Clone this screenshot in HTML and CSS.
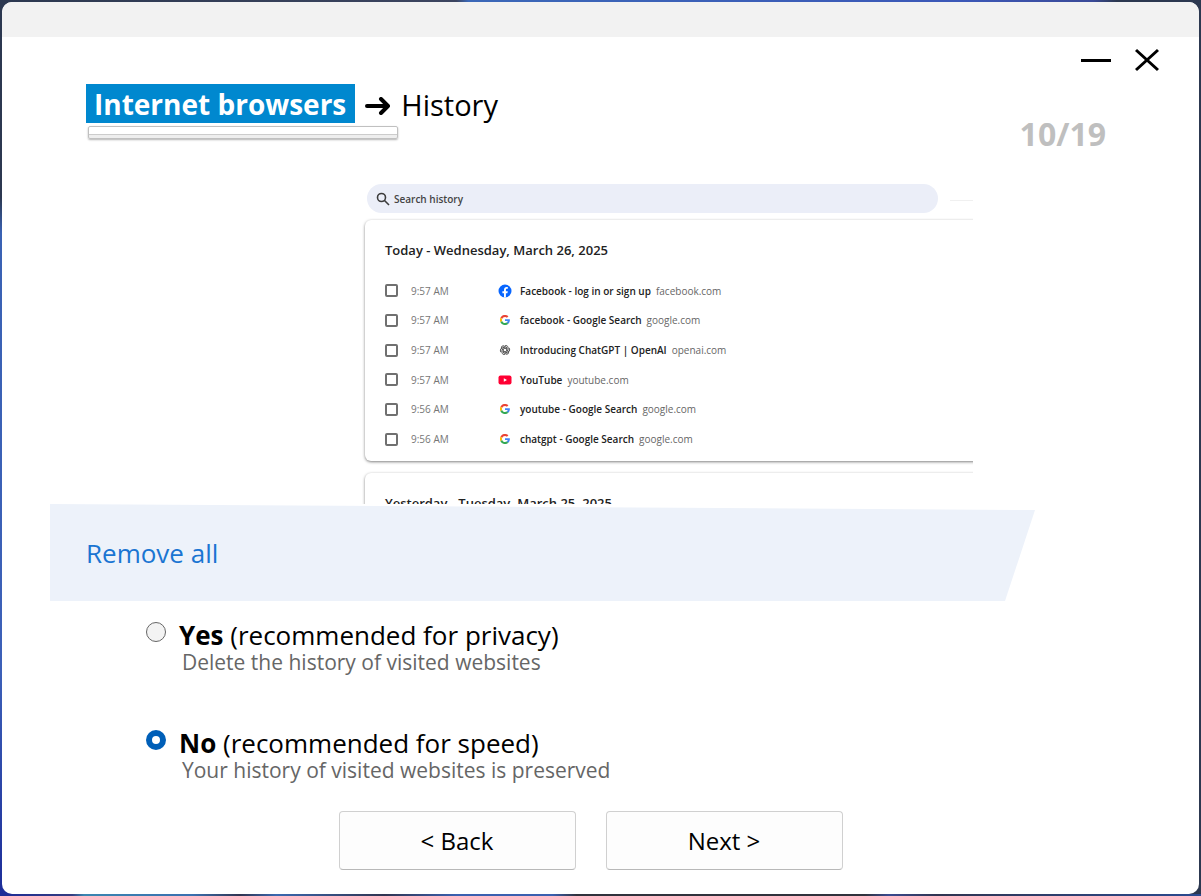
FILE: index.html
```html
<!DOCTYPE html>
<html lang="en">
<head>
    <meta charset="UTF-8">
    <title>Internet browsers - History</title>
    <link rel="stylesheet" href="styles.css">
</head>
<body>
    <svg class="symbols" aria-hidden="true">
        <symbol id="google" viewBox="0 0 48 48">
            <path fill="#EA4335" d="M24 9.5c3.5 0 6.700 1.200 9.200 3.600l6.900-6.900C35.900 2.400 30.500 0 24 0 14.600 0 6.500 5.400 2.600 13.200l8 6.200C12.400 13.700 17.700 9.500 24 9.500z"/>
            <path fill="#4285F4" d="M47 24.500c0-1.600-.2-3.100-.4-4.500H24v9h12.900c-.6 3-2.300 5.500-4.800 7.200l7.700 6C44.400 38 47 31.800 47 24.500z"/>
            <path fill="#FBBC05" d="M10.500 28.600a14.500 14.500 0 0 1 0-9.200l-8-6.200a24 24 0 0 0 0 21.600z"/>
            <path fill="#34A853" d="M24 48c6.500 0 11.900-2.100 15.900-5.800l-7.700-6c-2.200 1.400-4.900 2.300-8.200 2.300-6.300 0-11.600-4.200-13.500-9.900l-8 6.200C6.500 42.600 14.600 48 24 48z"/>
        </symbol>
    </svg>
    <div class="window">
        <div class="titlebar"></div>
        <div class="controls">
            <button type="button" aria-label="Minimize">
                <svg width="30" height="24" viewBox="0 0 30 24"><path d="M0 12.500h30" stroke="#000" stroke-width="3"/></svg>
            </button>
            <button type="button" aria-label="Close">
                <svg width="24" height="24" viewBox="0 0 24 24"><path d="M1 2l22 20M23 2L1 22" stroke="#000" stroke-width="3"/></svg>
            </button>
        </div>
        <header class="header">
            <div>
                <h1 class="title">
                    <span class="section">Internet browsers</span>
                    <svg width="26" height="18" viewBox="0 0 26 18" fill="none" stroke="#000" stroke-width="4" stroke-linecap="round" stroke-linejoin="round"><path d="M2 9h21M16 2l7 7-7 7"/></svg>
                    <span class="page">History</span>
                </h1>
                <div class="underline"></div>
            </div>
            <div class="counter">10/19</div>
        </header>

        <div class="preview">
            <div class="search-row">
                <label class="search">
                    <svg width="14" height="14" viewBox="0 0 14 14" fill="none" stroke="#3c3c3c" stroke-width="1.600"><circle cx="5.500" cy="5.500" r="4"/><path d="M8.500 8.500l4.500 4.500"/></svg>
                    <input type="text" placeholder="Search history" aria-label="Search history">
                </label>
                <div class="divider"></div>
            </div>
            <section class="card">
                <h2>Today - Wednesday, March 26, 2025</h2>
                <ul class="visits">
                    <li>
                        <input type="checkbox" id="v1"><time>9:57 AM</time>
                        <svg width="14" height="14" viewBox="0 0 14 14"><circle cx="7" cy="7" r="6.500" fill="#0866ff"/><path fill="#fff" d="M6 13.500V9.200H4.400V7.200H6V6c0-2 1-3 2.700-3l1.100.1v1.700H9c-.8 0-1.100.4-1.100 1.200v1.200h1.900l-.4 2H7.900v4.300z"/></svg>
                        <label for="v1">Facebook - log in or sign up</label><span>facebook.com</span>
                    </li>
                    <li>
                        <input type="checkbox" id="v2"><time>9:57 AM</time>
                        <svg width="14" height="14" viewBox="-9 -9 66 66"><use href="#google" width="48" height="48"/></svg>
                        <label for="v2">facebook - Google Search</label><span>google.com</span>
                    </li>
                    <li>
                        <input type="checkbox" id="v3"><time>9:57 AM</time>
                        <svg width="14" height="14" viewBox="0 0 14 14" fill="none" stroke="#555" stroke-width="1">
                            <g id="petal"><path d="M7 2.800a2 2 0 0 1 3 1.600v2.800L7 9"/></g>
                            <use href="#petal" transform="rotate(60 7 7)"/>
                            <use href="#petal" transform="rotate(120 7 7)"/>
                            <use href="#petal" transform="rotate(180 7 7)"/>
                            <use href="#petal" transform="rotate(240 7 7)"/>
                            <use href="#petal" transform="rotate(300 7 7)"/>
                        </svg>
                        <label for="v3">Introducing ChatGPT | OpenAI</label><span>openai.com</span>
                    </li>
                    <li>
                        <input type="checkbox" id="v4"><time>9:57 AM</time>
                        <svg width="14" height="14" viewBox="0 0 14 14"><rect x="0.500" y="2.500" width="13" height="9" rx="2" fill="#ff0033"/><path fill="#fff" d="M5.800 5.200L9 7 5.800 8.800z"/></svg>
                        <label for="v4">YouTube</label><span>youtube.com</span>
                    </li>
                    <li>
                        <input type="checkbox" id="v5"><time>9:56 AM</time>
                        <svg width="14" height="14" viewBox="-9 -9 66 66"><use href="#google" width="48" height="48"/></svg>
                        <label for="v5">youtube - Google Search</label><span>google.com</span>
                    </li>
                    <li>
                        <input type="checkbox" id="v6"><time>9:56 AM</time>
                        <svg width="14" height="14" viewBox="-9 -9 66 66"><use href="#google" width="48" height="48"/></svg>
                        <label for="v6">chatgpt - Google Search</label><span>google.com</span>
                    </li>
                </ul>
            </section>
            <section class="card">
                <h2>Yesterday - Tuesday, March 25, 2025</h2>
            </section>
        </div>

        <form>
            <h2 class="question">Remove all</h2>
            <div class="options">
                <div class="option">
                    <input type="radio" name="remove" id="yes" value="yes">
                    <label for="yes"><b>Yes</b> (recommended for privacy)
                        <small>Delete the history of visited websites</small>
                    </label>
                </div>
                <div class="option">
                    <input type="radio" name="remove" id="no" value="no" checked>
                    <label for="no"><b>No</b> (recommended for speed)
                        <small>Your history of visited websites is preserved</small>
                    </label>
                </div>
            </div>
            <div class="buttons">
                <button type="button">&lt; Back</button>
                <button type="button">Next &gt;</button>
            </div>
        </form>
    </div>
</body>
</html>
```
FILE: styles.css
```css
* {
    box-sizing: border-box;
}
body {
    margin: 0;
    padding: 2px;
    min-height: 100vh;
    font-family: "Open Sans", "Noto Sans", sans-serif;
    color: #000;
    background:
        linear-gradient(to right, #2c3850 0, #3c4560 38%, #3c68b8 39%, #3c58b8 80%, #3a4a98 91%, #2c3850 93%) top / 100% 2px no-repeat,
        linear-gradient(to right, #1c2c98 0, #343c80 6%, #3a86b0 7%, #3a70b0 16%, #303450 20%, #3a68b0 23%, #303450 32%, #3a60b0 38%, #3a60b0 46%, #30323c 48%, #30323c 72%, #3a4a90 74%, #303450 78%, #2a4a90 100%) bottom / 100% 2px no-repeat,
        linear-gradient(to right, transparent 50%, #2c3850 50%),
        linear-gradient(to bottom, #2c3850 0, #2c3850 22%, #3a62b4 26%, #3c60b8 75%, #1c2c98 100%);
}
h1, h2, ul {
    margin: 0;
    padding: 0;
    font-weight: normal;
}
.symbols {
    display: none;
}
.window {
    min-height: calc(100vh - 4px);
    background-color: #fff;
    border-radius: 10px;
    overflow: hidden;
}
.titlebar {
    height: 35px;
    background-color: #f2f2f2;
}
.controls {
    display: flex;
    justify-content: flex-end;
    gap: 24px;
    height: 47px;
    padding: 11px 40px 0 0;
}
.controls button {
    height: 24px;
    padding: 0;
    border: none;
    background: none;
}
.controls svg {
    display: block;
}

.header {
    display: flex;
    justify-content: space-between;
    height: 100px;
    padding: 0 93px 0 84px;
}
.title {
    display: flex;
    align-items: center;
    gap: 10px;
    height: 39px;
    font-size: 28px;
    line-height: 37px;
}
.title svg {
    margin-top: 4px;
}
.section {
    padding: 2px 9px 0 8px;
    font-weight: bold;
    color: #fff;
    background-color: #0088cf;
}
.page {
    padding-top: 2px;
    font-size: 29px;
}
.underline {
    width: 310px;
    height: 13px;
    margin: 3px 0 0 2px;
    border: 1px solid #c0c0c0;
    border-radius: 2px;
    background: linear-gradient(to bottom, #fff 0, #fff 7px, #ccc 7px, #ccc 8px, #eee 8px);
    box-shadow: 0 1px 2px rgba(0, 0, 0, 0.3);
}
.counter {
    padding-top: 28px;
    font-size: 32px;
    line-height: 44px;
    font-weight: bold;
    color: #bfbfbf;
}

.preview {
    height: 320px;
    margin: 0 226px 0 359px;
    padding-left: 4px;
    overflow: hidden;
    color: #222;
}
.search-row {
    display: flex;
    align-items: center;
    gap: 12px;
    height: 29px;
    margin-bottom: 7px;
    padding-left: 2px;
}
.search {
    display: flex;
    flex: 1;
    align-items: center;
    gap: 4px;
    height: 29px;
    padding-left: 9px;
    border-radius: 15px;
    background-color: #ebeef8;
}
.search input {
    flex: 1;
    padding: 0;
    border: none;
    background: none;
    font: 600 10px "Open Sans", sans-serif;
}
.search input::placeholder {
    color: #444;
}
.divider {
    width: 23px;
    height: 1px;
    margin-top: 4px;
    background-color: #f0f0f0;
}
.card {
    height: 241px;
    margin: 0 -20px 12px 0;
    padding: 20px 20px 0;
    border-radius: 6px;
    background-color: #fff;
    box-shadow: 0 1px 3px rgba(0, 0, 0, 0.5);
}
.card h2 {
    height: 36px;
    font-size: 13px;
    line-height: 21px;
    font-weight: 600;
}
.visits {
    display: grid;
    grid-auto-rows: 1fr;
    height: 178px;
    list-style: none;
    font-size: 10px;
}
.visits li {
    display: flex;
    align-items: center;
}
.visits input {
    appearance: none;
    width: 13px;
    height: 13px;
    margin: 0 13px 0 0;
    border: 2px solid #707070;
    border-radius: 2px;
}
.visits time {
    width: 87px;
    color: #767676;
}
.visits label {
    margin: 0 5px 0 8px;
    font-weight: 600;
}
.visits span {
    color: #666;
}

.question {
    height: 97px;
    margin: 0 164px 0 48px;
    padding-left: 36px;
    font-size: 26px;
    line-height: 98px;
    color: #1a75d2;
    background-color: #edf2fa;
    clip-path: polygon(0 0, 100% 6px, calc(100% - 30px) 100%, 0 100%);
}
.options {
    display: grid;
    gap: 48px;
    padding: 20px 0 0 144px;
}
.option {
    display: flex;
    gap: 13px;
    height: 60px;
}
.option input {
    appearance: none;
    width: 20px;
    height: 20px;
    margin: 1px 0 0;
    border: 1px solid #666;
    border-radius: 50%;
    background-color: #f3f3f3;
}
.option input:checked {
    border: 6px solid #005fb8;
    background-color: #fff;
}
.option label {
    font-size: 26px;
    line-height: 28px;
}
.option small {
    display: block;
    padding-left: 3px;
    font-size: 21px;
    line-height: 26px;
    color: #666;
}
.buttons {
    display: flex;
    justify-content: center;
    gap: 30px;
    padding: 22px 20px 24px 0;
}
.buttons button {
    width: 237px;
    height: 59px;
    border: 1px solid #d0d0d0;
    border-bottom-color: #b8b8b8;
    border-radius: 4px;
    background-color: #fdfdfd;
    font: 24px "Open Sans", sans-serif;
    color: #000;
}
```
